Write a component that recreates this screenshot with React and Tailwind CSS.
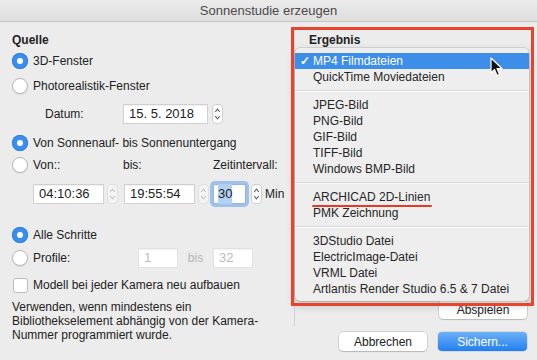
import React from "react";

function Radio({ checked }) {
  return checked ? (
    <span className="w-4 h-4 rounded-full bg-[#3b8ef0] flex items-center justify-center shrink-0 shadow-[inset_0_0_0_1px_#2f7fe0]">
      <span className="w-[6px] h-[6px] rounded-full bg-white" />
    </span>
  ) : (
    <span className="w-4 h-4 rounded-full bg-white border border-[#b9b9b9] shrink-0 shadow-[0_1px_1px_rgba(0,0,0,0.08)]" />
  );
}

function Stepper({ dim }) {
  const c = dim ? "#c4c4c4" : "#5f5f5f";
  return (
    <span
      className={`w-[11px] h-[20px] rounded-[4px] border ${
        dim ? "border-[#e0e0e0] bg-[#f4f4f4]" : "border-[#cfcfcf] bg-white"
      } flex items-center justify-center shrink-0`}
    >
      <svg width="7" height="16" viewBox="0 0 7 16">
        <path d="M1.2 6 L3.5 3.2 L5.8 6" fill="none" stroke={c} strokeWidth="1.1" />
        <path d="M1.2 10 L3.5 12.8 L5.8 10" fill="none" stroke={c} strokeWidth="1.1" />
      </svg>
    </span>
  );
}

function Field({ w, children, dim }) {
  return (
    <div
      className={`${w} h-5 bg-white border ${
        dim ? "border-[#e2e2e2] text-[#bdbdbd]" : "border-[#d0d0d0] text-[#222]"
      } flex items-center px-[5px] text-[13px] shadow-[inset_0_1px_0_rgba(0,0,0,0.05)]`}
    >
      {children}
    </div>
  );
}

const items = [
  ["MP4 Filmdateien", "QuickTime Moviedateien"],
  ["JPEG-Bild", "PNG-Bild", "GIF-Bild", "TIFF-Bild", "Windows BMP-Bild"],
  ["ARCHICAD 2D-Linien", "PMK Zeichnung"],
  ["3DStudio Datei", "ElectricImage-Datei", "VRML Datei", "Artlantis Render Studio 6.5 & 7 Datei"],
];

const btn =
  "h-[19px] bg-white rounded-[4px] shadow-[0_0_0_0.5px_rgba(0,0,0,0.22),0_1px_1px_rgba(0,0,0,0.12)] flex items-center justify-center";

export default function App() {
  return (
    <div className="relative w-[537px] h-[360px] overflow-hidden bg-[#ececec] font-['Liberation_Sans',Arial,sans-serif] text-[12px] text-[#222]">
      <div className="h-[22px] bg-gradient-to-b from-[#ebebeb] to-[#dedede] border-b border-[#c4c4c4] flex items-center justify-center text-[13px] text-[#4a4a4a]">
        Sonnenstudie erzeugen
      </div>

      <div className="flex">
        {/* left column */}
        <div className="w-[294px] pl-[12px] pt-[10px] flex flex-col">
          <div className="font-bold h-4 flex items-center">Quelle</div>
          <div className="mt-[5px] flex items-center gap-[5px] h-4">
            <Radio checked />
            <span>3D-Fenster</span>
          </div>
          <div className="mt-[9px] flex items-center gap-[5px] h-4">
            <Radio />
            <span>Photorealistik-Fenster</span>
          </div>
          <div className="mt-[10px] flex items-center h-5">
            <span className="w-[111px] pl-[33px]">Datum:</span>
            <Field w="w-[85px]">15. 5. 2018</Field>
            <span className="ml-[4px]">
              <Stepper />
            </span>
          </div>
          <div className="mt-[11px] flex items-center gap-[5px] h-4">
            <Radio checked />
            <span>Von Sonnenauf- bis Sonnenuntergang</span>
          </div>
          <div className="mt-[6px] flex items-center h-4">
            <div className="flex items-center gap-[5px] w-[111px]">
              <Radio />
              <span>Von::</span>
            </div>
            <span className="w-[90px]">bis:</span>
            <span>Zeitintervall:</span>
          </div>
          <div className="mt-[11px] flex items-center h-5">
            <div className="w-[21px]" />
            <Field w="w-[71px]">04:10:36</Field>
            <span className="ml-[3px] mr-[6px]">
              <Stepper dim />
            </span>
            <Field w="w-[71px]">19:55:54</Field>
            <span className="ml-[3px] mr-[4px]">
              <Stepper dim />
            </span>
            <div className="w-[33px] h-5 bg-white border border-[#8fb5e3] ring-[3px] ring-[#9fc1ec] rounded-[2px] flex items-center px-[4px] text-[13px]">
              <span className="bg-[#b3d1f5]">30</span>
            </div>
            <span className="ml-[5px] mr-[3px]">
              <Stepper />
            </span>
            <span>Min</span>
          </div>
          <div className="mt-[23px] flex items-center gap-[5px] h-4">
            <Radio checked />
            <span>Alle Schritte</span>
          </div>
          <div className="mt-[5px] flex items-center h-5">
            <div className="flex items-center gap-[5px] w-[126px]">
              <Radio />
              <span>Profile:</span>
            </div>
            <Field w="w-[40px]" dim>
              1
            </Field>
            <span className="w-[35px] text-center text-[#b5b5b5]">bis</span>
            <Field w="w-[40px]" dim>
              32
            </Field>
          </div>
          <div className="mt-[9px] flex items-center gap-[5px] h-4">
            <span className="w-[15px] h-[15px] bg-white border border-[#bdbdbd] rounded-[3px] ml-[1px] shrink-0" />
            <span>Modell bei jeder Kamera neu aufbauen</span>
          </div>
          <p className="mt-[7px] leading-[14px]">
            Verwenden, wenn mindestens ein
            <br />
            Bibliothekselement abhängig von der Kamera-
            <br />
            Nummer programmiert wurde.
          </p>
        </div>

        {/* right column */}
        <div className="flex-1 flex">
          <div className="w-px bg-[#d2d2d2] mt-[6px] mb-[25px]" />
          <div className="flex-1 pl-[14px] pt-[10px] pr-[10px] flex flex-col">
            <div className="font-bold h-4 flex items-center">Ergebnis</div>
            <div className={`mt-[252px] self-end w-[88px] ${btn}`}>Abspielen</div>
            <div className="mt-[13px] flex justify-end gap-[11px]">
              <div className={`w-[88px] ${btn}`}>Abbrechen</div>
              <div className="w-[89px] h-[19px] rounded-[4px] bg-gradient-to-b from-[#6cb0f7] to-[#1f7ff0] text-white flex items-center justify-center shadow-[0_0_0_0.5px_rgba(0,0,0,0.15)]">
                Sichern...
              </div>
            </div>
          </div>
        </div>
      </div>

      {/* popup menu */}
      <div className="absolute left-[295px] top-[48px] w-[234px] h-[253px] bg-[#eeeeee] rounded-[5px] shadow-[0_0_0_0.5px_rgba(0,0,0,0.18),0_4px_10px_rgba(0,0,0,0.22)] pt-[5px] text-[12px] text-[#262626]">
        {items.map((group, gi) => (
          <div key={gi}>
            {gi > 0 && (
              <div className="h-[12px] flex items-center">
                <div className="w-full h-[2px] bg-[#dcdcdc] border-b border-[#f8f8f8]" />
              </div>
            )}
            {group.map((t) => {
              const sel = t === "MP4 Filmdateien";
              return (
                <div
                  key={t}
                  className={`h-4 flex items-center relative pl-[18px] ${sel ? "bg-[#3c8ee8] text-white" : ""}`}
                >
                  {sel && <span className="absolute left-[5px] text-[12px] font-bold">✓</span>}
                  <span className={t === "ARCHICAD 2D-Linien" ? "relative" : ""}>
                    {t}
                    {t === "ARCHICAD 2D-Linien" && (
                      <span className="absolute left-[-1px] right-[-2px] bottom-[-1px] h-[2px] bg-[#e33b26] rounded-full" />
                    )}
                  </span>
                </div>
              );
            })}
          </div>
        ))}
      </div>

      {/* mouse cursor */}
      <svg className="absolute left-[490px] top-[57px]" width="14" height="21" viewBox="0 0 14 21">
        <path d="M1 1 L1 16 L4.5 12.5 L7 18.5 L9.5 17.5 L7 11.5 L12 11.5 Z" fill="#111" stroke="#fff" strokeWidth="1.2" strokeLinejoin="round" />
      </svg>

      {/* red annotation frame */}
      <div className="absolute left-[291px] top-[27px] w-[243px] h-[279px] border-[3px] border-[#e8442d]" />
    </div>
  );
}
